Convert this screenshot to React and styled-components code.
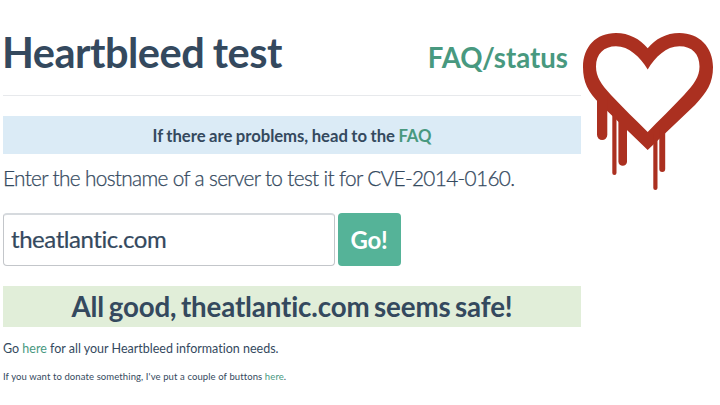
import React, { useState } from 'react';
import styled, { createGlobalStyle } from 'styled-components';

const GlobalStyle = createGlobalStyle`
  * {
    box-sizing: border-box;
  }

  body {
    margin: 0;
    background: #fff;
    color: #34495e;
    font-family: Lato, 'Liberation Sans', sans-serif;
    font-variant-ligatures: none;
  }
`;

const Page = styled.div`
  display: flex;
  width: 720px;
  height: 405px;
  padding-left: 3px;
  overflow: hidden;
`;

const Content = styled.main`
  display: flex;
  flex-direction: column;
  width: 578px;
  white-space: nowrap;
`;

const Link = styled.a`
  color: #48997f;
  text-decoration: none;
`;

const Header = styled.header`
  display: flex;
  justify-content: space-between;
  align-items: flex-start;
  height: 96px;
  padding: 28px 13px 0 0;
  border-bottom: 1px solid #e7e9ec;
`;

const Title = styled.h1`
  margin: 0 0 0 -1px;
  font-size: 41.5px;
  line-height: 49px;
  font-weight: 700;
  letter-spacing: -0.5px;
  word-spacing: -1px;
`;

const StatusLink = styled(Link)`
  font-size: 27.6px;
  line-height: 59px;
  font-weight: 700;
`;

const Notice = styled.p`
  margin: 20px 0 0;
  height: 38px;
  background: #dbebf6;
  font-size: 16.7px;
  line-height: 40px;
  font-weight: 700;
  letter-spacing: -0.04px;
  word-spacing: -0.5px;
  text-align: center;
`;

const Lead = styled.p`
  margin: 9px 0 0;
  font-size: 20.8px;
  line-height: 30px;
  font-weight: 300;
  letter-spacing: -0.66px;
  -webkit-text-stroke: 0.25px #34495e;
`;

const Form = styled.form`
  display: flex;
  gap: 3px;
  height: 53px;
  margin-top: 20px;
`;

const HostInput = styled.input`
  width: 332px;
  padding: 0 8px 3px 7px;
  border: 1px solid #c3c6ca;
  border-top: 2px solid #d6dade;
  border-radius: 4px;
  outline: none;
  background: #fff;
  color: #34495e;
  font: 400 24px Lato, sans-serif;
  font-variant-ligatures: none;
  letter-spacing: -0.44px;
  -webkit-text-stroke: 0.2px #34495e;
`;

const GoButton = styled.button`
  width: 63px;
  padding: 0 1px 1px 0;
  border: none;
  border-radius: 4px;
  background: #55b398;
  color: #fff;
  font: 700 24px Lato, sans-serif;
  letter-spacing: -0.3px;
  cursor: pointer;
`;

const Result = styled.h2`
  margin: 20px 0 0;
  height: 41px;
  background: #e1eed9;
  font-size: 27.7px;
  line-height: 42px;
  font-weight: 700;
  letter-spacing: -0.14px;
  word-spacing: -2px;
  text-align: center;
`;

const Info = styled.p`
  margin: 11px 0 0;
  font-size: 12.5px;
  line-height: 21px;
`;

const Donate = styled.p`
  margin: 11px 0 0;
  font-size: 9.5px;
  line-height: 14px;
  letter-spacing: 0.1px;
`;

const HeartIcon = styled.svg`
  flex: none;
  width: 136px;
  height: 170px;
  margin-top: 26px;
  margin-left: -1px;
`;

const drips = [
  { x: 17, width: 10.3, top: 70, bottom: 114 },
  { x: 32.3, width: 4.2, top: 80, bottom: 149 },
  { x: 38.4, width: 8.6, top: 92, bottom: 139.8 },
  { x: 73.3, width: 4.2, top: 108, bottom: 164 },
  { x: 79.3, width: 5.9, top: 103, bottom: 146 },
];

const BleedingHeart = () => (
  <HeartIcon viewBox="0 0 136 170" fill="#ab3020" aria-hidden="true">
    <path
      fillRule="evenodd"
      d="M67.7 22.2 C60 13 49 7 36 7 C16 7 3 21 3 41 C3 56 8 66 20 78 L67.7 124 L115 79 C127 66 133 57 133 41 C133 21 119 7 99.5 7 C86 7 75.5 13 67.7 22.2 Z M67.7 43.5 C60 31 49 20.3 36 20.3 C24 20.3 16 28 16 40.5 C16 51 21 58 31 69 C43 82 56 94 67.7 106 C79 94 92 82 104 69 C114 58 119.5 51 119.5 40.5 C119.5 28 112 20.3 99.5 20.3 C86 20.3 75.5 31 67.7 43.5 Z"
    />
    {drips.map(({ x, width, top, bottom }) => (
      <path
        key={x}
        d={`M${x} ${top} h${width} V${bottom - width / 2} a${width / 2} ${width / 2} 0 0 1 ${-width} 0 Z`}
      />
    ))}
  </HeartIcon>
);

const App = () => {
  const [host, setHost] = useState('theatlantic.com');

  return (
    <>
      <GlobalStyle />
      <Page>
        <Content>
          <Header>
            <Title>Heartbleed test</Title>
            <StatusLink href="#faq">FAQ/status</StatusLink>
          </Header>
          <Notice>
            If there are problems, head to the <Link href="#faq">FAQ</Link>
          </Notice>
          <Lead>Enter the hostname of a server to test it for CVE-2014-0160.</Lead>
          <Form onSubmit={(e) => e.preventDefault()}>
            <HostInput
              value={host}
              spellCheck={false}
              onChange={(e) => setHost(e.target.value)}
            />
            <GoButton type="submit">Go!</GoButton>
          </Form>
          <Result>All good, theatlantic.com seems safe!</Result>
          <Info>
            Go <Link href="#info">here</Link> for all your Heartbleed information needs.
          </Info>
          <Donate>
            If you want to donate something, I've put a couple of buttons{' '}
            <Link href="#donate">here</Link>.
          </Donate>
        </Content>
        <BleedingHeart />
      </Page>
    </>
  );
};

export default App;
